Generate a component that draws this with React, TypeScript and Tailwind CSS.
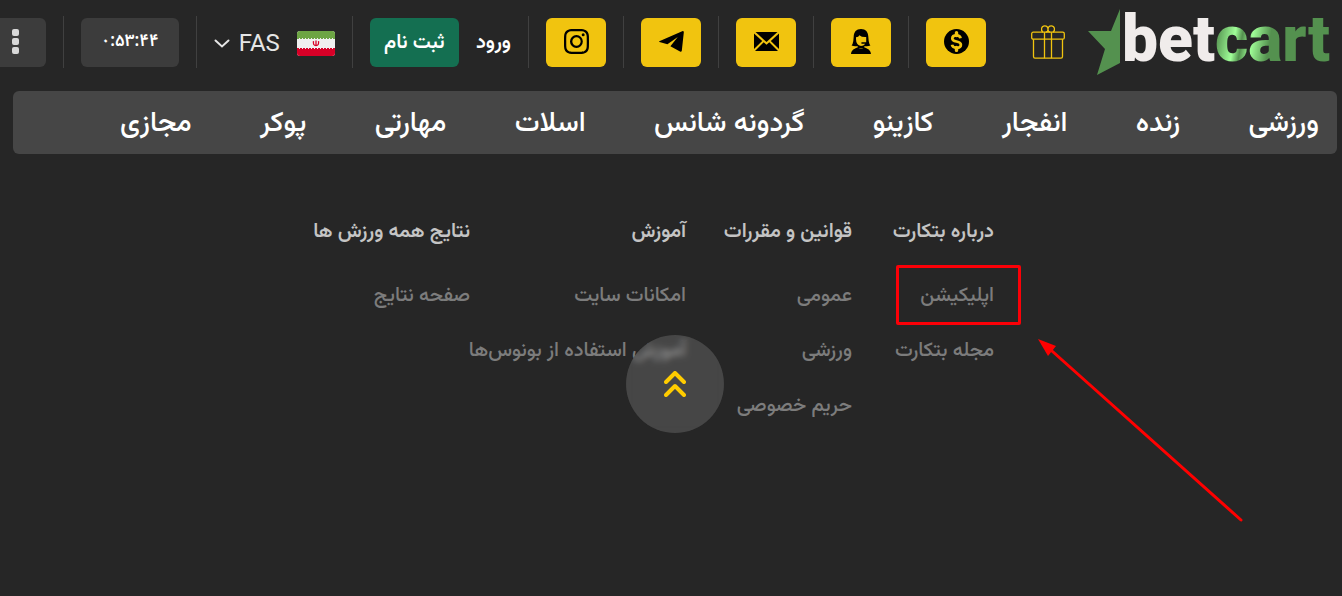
import React from "react";
import { BsInstagram } from "react-icons/bs";

const NAV_ITEMS = ["ورزشی", "زنده", "انفجار", "کازینو", "گردونه شانس", "اسلات", "مهارتی", "پوکر", "مجازی"];

const COLUMNS = [
	{ title: "درباره بتکارت", width: "w-[142px]", links: ["اپلیکیشن", "مجله بتکارت"] },
	{ title: "قوانین و مقررات", width: "w-[166px]", links: ["عمومی", "ورزشی", "حریم خصوصی"] },
	{ title: "آموزش", width: "w-[216px]", links: ["امکانات سایت", "آموزش استفاده از بونوس‌ها"] },
	{ title: "نتایج همه ورزش ها", width: "w-[160px]", links: ["صفحه نتایج"] },
];

function DollarIcon() {
	return (
		<svg width="25" height="25" viewBox="0 0 25 25" fill="none">
			<circle cx="12.5" cy="12.5" r="12.5" fill="#000" />
			<path
				d="M16.6 9.2C16.2 7.2 14.6 6.3 12.5 6.3C10.2 6.3 8.3 7.4 8.3 9.4C8.3 11.5 10.2 12 12.5 12.5C15 13 16.9 13.6 16.9 15.7C16.9 17.8 15 18.8 12.6 18.8C10.2 18.8 8.4 17.8 8 15.8"
				stroke="#f1c40f"
				strokeWidth="2.7"
			/>
			<path d="M12.5 3.6V6.5M12.5 18.5V21.4" stroke="#f1c40f" strokeWidth="3.4" strokeLinecap="round" />
		</svg>
	);
}

function SupportIcon() {
	return (
		<svg width="20" height="25" viewBox="0 0 20 25" fill="#000">
			<path
				fillRule="evenodd"
				d="M10 0C5.200 0 2.900 3 2.700 7.500L2.300 12Q1.900 14.800 .6 16.500Q3.200 17.600 6.600 17V19H13.400V17Q16.800 17.600 19.400 16.500Q18.100 14.800 17.700 12L17.300 7.500C17.100 3 14.800 0 10 0ZM5 8.300Q7.600 8.200 8.400 6.200Q11 8.400 15.200 8V13.200H11Q10.200 13.200 10.200 14Q10.200 14.800 11 14.800H14.300Q12.600 17 10 17Q5 16 5 10Z"
			/>
			<path d="M0 25C.2 21.500 2.400 20 6.400 18.400Q10 20.400 13.600 18.400C17.600 20 19.800 21.500 20 25Z" />
		</svg>
	);
}

function MailIcon() {
	return (
		<svg width="25" height="19" viewBox="0 0 25 19" fill="#000">
			<path d="M1.5 0H23.5L12.5 10Z" />
			<path d="M0 1.5L8.2 9L0 17Z" />
			<path d="M25 1.5L16.8 9L25 17Z" />
			<path d="M9.7 10.2L12.5 12.7L15.3 10.2L24 19H1Z" />
		</svg>
	);
}

function TelegramIcon() {
	return (
		<svg width="25" height="21" viewBox="0 0 25 21" fill="#000">
			<path d="M.3 10.2L23.2 .2Q25 -.2 24.800 1.500L22.800 19.800Q22.400 21.400 21 20.600L11.400 15.200L18.800 6L8.400 13.200L.5 11Q-.2 10.600 .3 10.200Z" />
		</svg>
	);
}

function GiftIcon() {
	return (
		<svg width="34" height="34" viewBox="0 0 34 34" fill="none" stroke="#f1c40f" strokeWidth="1.3">
			<rect x=".7" y="7.2" width="32.6" height="7" rx="1.5" />
			<path d="M2.5 14.2V31.5Q2.5 33.2 4 33.2H30Q31.5 33.2 31.5 31.5V14.2" />
			<path d="M13.5 7.2V33.2M20.5 7.2V33.2" />
			<path d="M12 7.2C9.2 5 10.6 .8 13.7 .8C16 .8 17 2.6 17 4.5C17 2.6 18 .8 20.3 .8C23.4 .8 24.8 5 22 7.2M17 4.5C17 6 16 7 14.8 7.2M17 4.5C17 6 18 7 19.2 7.2" />
		</svg>
	);
}

function IranFlag() {
	return (
		<svg width="38" height="25" viewBox="0 0 38 25">
			<clipPath id="flag">
				<rect width="38" height="25" rx="3" />
			</clipPath>
			<g clipPath="url(#flag)">
				<rect width="38" height="25" fill="#f0f0f0" />
				<rect width="38" height="7" fill="#6da544" />
				<rect y="18" width="38" height="7" fill="#d80027" />
				<path d="M0 7.5H38" stroke="#6da544" strokeDasharray="2 1" />
				<path d="M0 17.5H38" stroke="#d80027" strokeDasharray="2 1" />
				<path d="M16.5 10.2Q15.8 14.6 19 14.6Q22.2 14.6 21.5 10.2M19 9.5V15" fill="none" stroke="#d80027" strokeWidth="1.3" />
			</g>
		</svg>
	);
}

const CONTACTS = [
	{ label: "دلار", icon: <DollarIcon /> },
	{ label: "پشتیبانی", icon: <SupportIcon /> },
	{ label: "ایمیل", icon: <MailIcon /> },
	{ label: "تلگرام", icon: <TelegramIcon /> },
	{ label: "اینستاگرام", icon: <BsInstagram size={25} color="#000" /> },
];

function Divider() {
	return <span className="h-[52px] w-px shrink-0 bg-[#404040]" />;
}

function Logo() {
	return (
		<a href="#" dir="ltr" aria-label="betcart" className="flex h-[66px] w-[242px] shrink-0 items-start justify-between">
			<svg width="32" height="66" viewBox="0 0 32 66" fill="#54914f">
				<path d="M32 0V54L9 66L17 40L0 22H23Z" />
			</svg>
			<span className="font-[Roboto] text-[64px] leading-[62px] font-black">
				<span className="text-[#f0eceb]">bet</span>
				<span className="bg-linear-[100deg,#54914f_5%,#a0ff98_20%,#54914f_26%,#a0ff98_34%,#54914f_48%] bg-clip-text text-transparent">
					cart
				</span>
			</span>
		</a>
	);
}

function Header() {
	return (
		<header className="flex h-[84px] items-center gap-[17px] overflow-hidden pr-3">
			<Logo />
			<a href="#" aria-label="هدیه" className="mr-[6px] ml-7 shrink-0">
				<GiftIcon />
			</a>
			{CONTACTS.map((c) => (
				<React.Fragment key={c.label}>
					<button aria-label={c.label} className="flex h-[49px] w-[60px] shrink-0 items-center justify-center rounded-md bg-[#f1c40f] pb-[2px]">
						{c.icon}
					</button>
					<Divider />
				</React.Fragment>
			))}
			<a href="#" className="shrink-0 pt-[2px] text-[20px] font-semibold text-white">
				ورود
			</a>
			<button className="h-[49px] w-[89px] shrink-0 rounded-md bg-[#146f51] pt-[2px] text-[20px] font-semibold text-white">ثبت نام</button>
			<Divider />
			<button dir="ltr" className="flex shrink-0 items-center pt-[2px] text-[#e6e6e6]">
				<svg width="16" height="9" viewBox="0 0 16 9" fill="none" stroke="currentColor" strokeWidth="2" strokeLinecap="round">
					<path d="M1.5 1.5L8 7.5L14.5 1.5" />
				</svg>
				<span className="mr-[17px] ml-[9px] font-[Roboto] text-[24px]">FAS</span>
				<IranFlag />
			</button>
			<Divider />
			<div className="flex h-[49px] w-[98px] shrink-0 items-center justify-center rounded-md bg-[#3c3c3c] font-['Noto_Sans_Arabic','DejaVu_Sans',sans-serif] text-[17px] font-semibold text-white">
				۰:۵۳:۴۴
			</div>
			<Divider />
			<button aria-label="منو" className="flex h-[49px] w-[60px] shrink-0 flex-col items-center justify-center gap-[2px] rounded-md bg-[#3c3c3c] pb-[2px]">
				<span className="size-[7px] rounded-[2px] bg-[#d8d8d8]" />
				<span className="size-[7px] rounded-[2px] bg-[#d8d8d8]" />
				<span className="size-[7px] rounded-[2px] bg-[#d8d8d8]" />
			</button>
		</header>
	);
}

export default function App() {
	return (
		<div dir="rtl" className="relative min-h-screen overflow-hidden bg-[#262626] font-[Vazirmatn,'Noto_Sans_Arabic','DejaVu_Sans',sans-serif]">
			<Header />
			<nav className="mt-[7px] mr-[5px] ml-[13px] flex h-[63px] items-center justify-between rounded-md bg-[#464646] pt-[2px] pr-[18px] pl-[107px] text-[28px] font-medium text-white">
				{NAV_ITEMS.map((item) => (
					<a key={item} href="#" className="whitespace-nowrap">
						{item}
					</a>
				))}
			</nav>

			<footer className="mt-[62px] flex pr-[348px] text-[20px] leading-8">
				{COLUMNS.map((col) => (
					<section key={col.title} className={`${col.width} shrink-0 whitespace-nowrap`}>
						<h2 className="font-semibold text-[#c4c4c4]">{col.title}</h2>
						<ul className="mt-8 flex flex-col gap-[23px] font-medium text-[#7c7c7c]">
							{col.links.map((link) => (
								<li key={link}>
									<a href="#">{link}</a>
								</li>
							))}
						</ul>
					</section>
				))}
			</footer>

			<button
				aria-label="بازگشت به بالا"
				className="absolute top-[335px] left-[626px] flex size-[98px] items-center justify-center rounded-full bg-white/15 backdrop-blur-[3px]"
			>
				<svg width="22" height="26" viewBox="0 0 22 26" fill="none" stroke="#ffcc00" strokeWidth="4" strokeLinecap="round" strokeLinejoin="round">
					<path d="M2 11L11 2L20 11M2 24L11 15L20 24" />
				</svg>
			</button>

			{/* highlight around the app link and the arrow to it */}
			<div className="pointer-events-none absolute top-[265px] right-[321px] h-[60px] w-[125px] rounded-[2px] border-3 border-[#fb0007]" />
			<svg className="pointer-events-none absolute top-[339px] right-[99px]" width="205" height="183" viewBox="0 0 205 183">
				<path d="M14 12L203 181" stroke="#ff0000" strokeWidth="3" strokeLinecap="round" />
				<path d="M0 0L18 7L10 17Z" fill="#ff0000" />
			</svg>
		</div>
	);
}
